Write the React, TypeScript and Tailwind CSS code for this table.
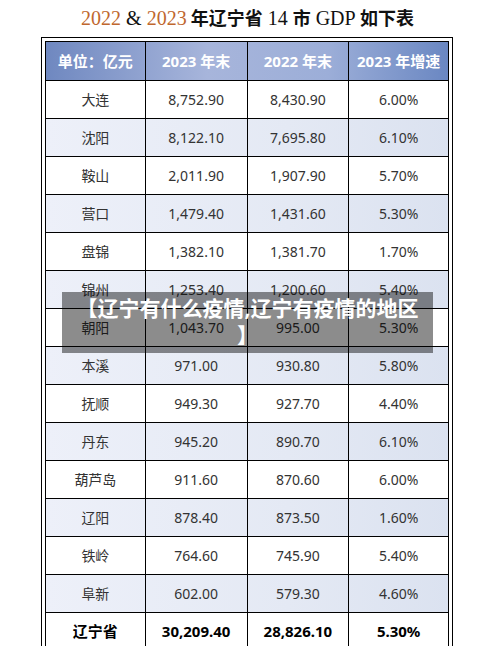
import React from 'react';

type Row = { city: string; y2023: string; y2022: string; rate: string };

const rows: Row[] = [
  { city: '大连', y2023: '8,752.90', y2022: '8,430.90', rate: '6.00%' },
  { city: '沈阳', y2023: '8,122.10', y2022: '7,695.80', rate: '6.10%' },
  { city: '鞍山', y2023: '2,011.90', y2022: '1,907.90', rate: '5.70%' },
  { city: '营口', y2023: '1,479.40', y2022: '1,431.60', rate: '5.30%' },
  { city: '盘锦', y2023: '1,382.10', y2022: '1,381.70', rate: '1.70%' },
  { city: '锦州', y2023: '1,253.40', y2022: '1,200.60', rate: '5.40%' },
  { city: '朝阳', y2023: '1,043.70', y2022: '995.00', rate: '5.30%' },
  { city: '本溪', y2023: '971.00', y2022: '930.80', rate: '5.80%' },
  { city: '抚顺', y2023: '949.30', y2022: '927.70', rate: '4.40%' },
  { city: '丹东', y2023: '945.20', y2022: '890.70', rate: '6.10%' },
  { city: '葫芦岛', y2023: '911.60', y2022: '870.60', rate: '6.00%' },
  { city: '辽阳', y2023: '878.40', y2022: '873.50', rate: '1.60%' },
  { city: '铁岭', y2023: '764.60', y2022: '745.90', rate: '5.40%' },
  { city: '阜新', y2023: '602.00', y2022: '579.30', rate: '4.60%' },
  { city: '辽宁省', y2023: '30,209.40', y2022: '28,826.10', rate: '5.30%' },
];

const sans = { fontFamily: '"Noto Sans", "Noto Sans CJK SC", sans-serif' };

const App: React.FC = () => {
  return (
    <div className="relative w-[495px] h-[646px] overflow-hidden bg-white" style={sans}>
      {/* title */}
      <div className="h-[37px] flex items-center justify-center pb-[2px]">
        <span
          className="text-[20px] text-[#111]"
          style={{ fontFamily: '"Liberation Serif", "Noto Sans CJK SC", serif' }}
        >
          <span className="text-[#c0672e]">2022</span> &amp; <span className="text-[#c0672e]">2023</span>
          <span className="ml-[4px] font-bold text-[18px]">年辽宁省</span> 14 <span className="font-bold text-[18px]">市</span> GDP{' '}
          <span className="font-bold text-[18px]">如下表</span>
        </span>
      </div>

      {/* table frame */}
      <div className="ml-[41px] w-[412px] border border-black p-[3px] pb-0 border-b-0">
        <div className="border-l border-t border-black">
          <div className="flex h-[39px] bg-[linear-gradient(90deg,#6f88c0_0%,#a7b5db_40%,#9caed8_70%,#6a87c2_100%)] text-white font-bold text-[15px]">
            <div className="w-[100px] flex items-center justify-center border-r border-b border-black">单位：亿元</div>
            <div className="w-[102px] flex items-center justify-center border-r border-b border-black">2023 年末</div>
            <div className="w-[102px] flex items-center justify-center border-r border-b border-black">2022 年末</div>
            <div className="w-[100px] flex items-center justify-center border-r border-b border-black">2023 年增速</div>
          </div>
          {rows.map((r, i) => {
            const last = i === rows.length - 1;
            return (
              <div
                key={r.city}
                className={`flex h-[38px] text-[14px] ${last ? 'font-bold text-black text-[15px]' : 'text-[#333]'} ${
                  i % 2 === 1 ? 'bg-[linear-gradient(90deg,#edf0f9_0%,#e4e9f4_60%,#dbe2f0_100%)]' : 'bg-white'
                }`}
              >
                <div className="w-[100px] flex items-center justify-center border-r border-b border-black">{r.city}</div>
                <div className="w-[102px] flex items-center justify-center border-r border-b border-black">{r.y2023}</div>
                <div className="w-[102px] flex items-center justify-center border-r border-b border-black">{r.y2022}</div>
                <div className="w-[100px] flex items-center justify-center border-r border-b border-black">{r.rate}</div>
              </div>
            );
          })}
        </div>
      </div>

      {/* overlay caption */}
      <div className="absolute left-[62px] top-[292px] w-[371px] h-[61px] bg-black/45 pt-[3px] text-center text-white font-bold text-[21px] leading-[27px] whitespace-nowrap">
        【辽宁有什么疫情,辽宁有疫情的地区
        <br />
        】
      </div>
    </div>
  );
};

export default App;
